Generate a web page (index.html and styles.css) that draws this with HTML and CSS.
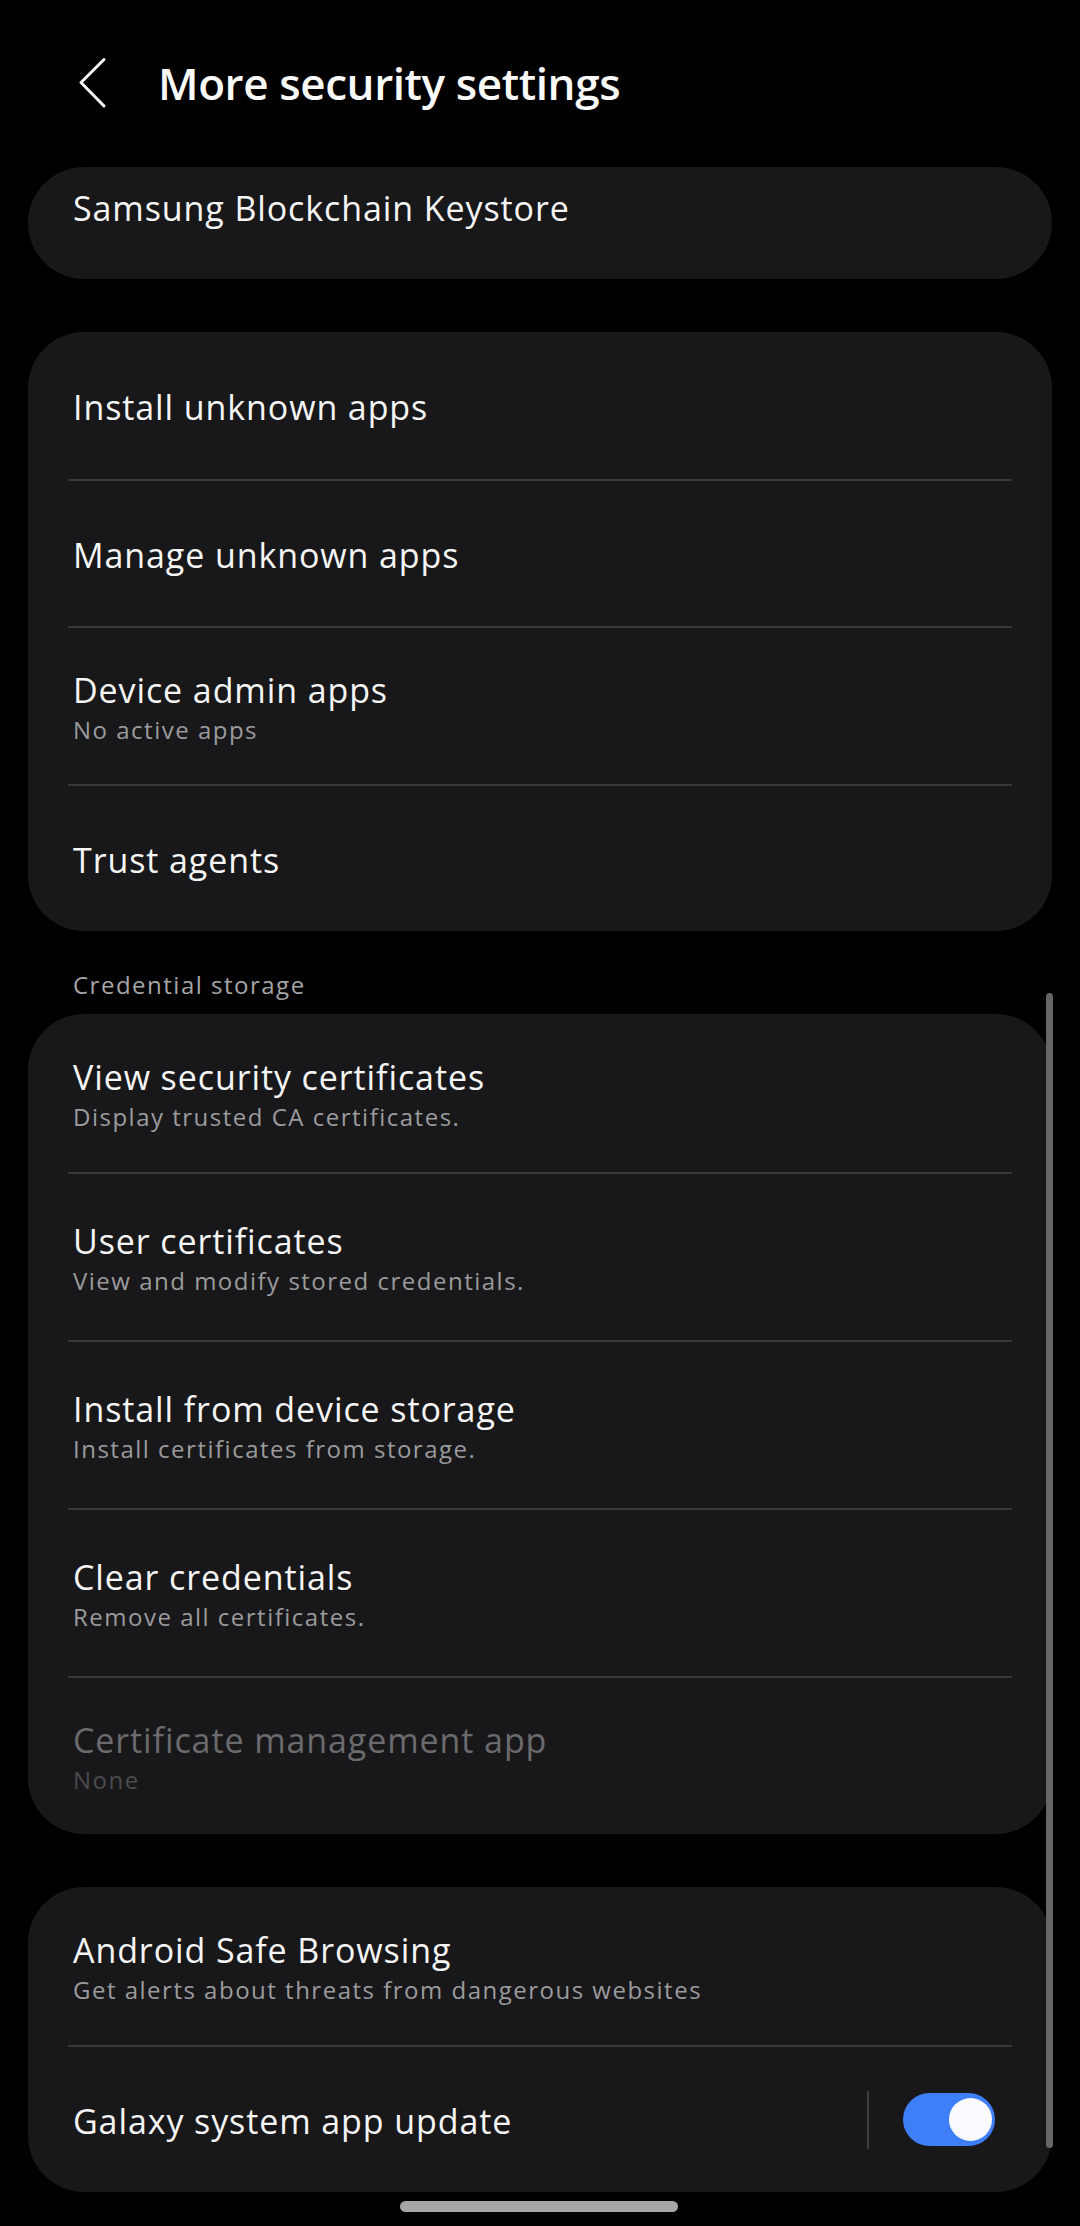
FILE: index.html
```html
<!DOCTYPE html>
<html lang="en">
<head>
<meta charset="utf-8">
<title>More security settings</title>
<link rel="stylesheet" href="styles.css">
</head>
<body>
<div class="screen">
  <header class="appbar">
    <span class="back" aria-label="Back">
      <svg width="30" height="56" viewBox="0 0 30 56"><polyline points="26,3.5 3,26.5 26,50" fill="none" stroke="#f5f5f5" stroke-width="3" stroke-linecap="round" stroke-linejoin="round"/></svg>
    </span>
    <h1 class="appbar-title">More security settings</h1>
  </header>

  <main class="list">
    <section class="card card-cut">
      <div class="title">Samsung Blockchain Keystore</div>
    </section>

    <section class="card">
      <div class="row"><div class="title">Install unknown apps</div></div>
      <div class="row"><div class="title">Manage unknown apps</div></div>
      <div class="row two"><div class="title">Device admin apps</div><div class="sub">No active apps</div></div>
      <div class="row"><div class="title">Trust agents</div></div>
    </section>

    <h2 class="category">Credential storage</h2>

    <section class="card">
      <div class="row two"><div class="title">View security certificates</div><div class="sub">Display trusted CA certificates.</div></div>
      <div class="row two lg"><div class="title">User certificates</div><div class="sub">View and modify stored credentials.</div></div>
      <div class="row two lg"><div class="title">Install from device storage</div><div class="sub">Install certificates from storage.</div></div>
      <div class="row two lg"><div class="title">Clear credentials</div><div class="sub">Remove all certificates.</div></div>
      <div class="row two disabled"><div class="title">Certificate management app</div><div class="sub">None</div></div>
    </section>

    <section class="card">
      <div class="row two"><div class="title">Android Safe Browsing</div><div class="sub">Get alerts about threats from dangerous websites</div></div>
      <div class="row switch-row">
        <div class="title">Galaxy system app update</div>
        <div class="control">
          <span class="vdivider"></span>
          <span class="switch on"><span class="thumb"></span></span>
        </div>
      </div>
    </section>
  </main>

  <div class="scrollbar"></div>
  <div class="home-pill"></div>
</div>
</body>
</html>
```

FILE: styles.css
```css
html, body {
  margin: 0;
  padding: 0;
  background: #000;
}

.screen {
  position: relative;
  width: 1080px;
  height: 2226px;
  overflow: hidden;
  background: #000;
  font-family: "Open Sans", Roboto, "Liberation Sans", sans-serif;
  color: #f5f5f5;
}

.appbar {
  height: 167px;
  display: flex;
  align-items: center;
  padding-left: 78px;
  box-sizing: border-box;
}

.back {
  display: flex;
  width: 30px;
  height: 56px;
}

.appbar-title {
  margin: 0 0 0 50px;
  font-size: 44px;
  line-height: 53px;
  font-weight: 600;
  letter-spacing: -0.4px;
  color: #fafafa;
}

.list {
  display: flex;
  flex-direction: column;
}

.card {
  margin: 0 28px 53px;
  background: #18181a;
  border-radius: 56px;
  display: flex;
  flex-direction: column;
}

.card-cut {
  height: 112px;
  box-sizing: border-box;
  padding: 21px 0 0 45px;
}

.title {
  font-size: 34px;
  line-height: 40px;
  letter-spacing: 0.9px;
  color: #f5f5f5;
  white-space: nowrap;
}

.sub {
  margin-top: 5px;
  font-size: 24px;
  line-height: 30px;
  letter-spacing: 1.5px;
  color: #9b9b9d;
  white-space: nowrap;
}

.row {
  margin: 0 40px;
  padding: 3px 17px 0 5px;
  height: 147px;
  box-sizing: border-box;
  display: flex;
  flex-direction: column;
  justify-content: center;
}

.row + .row {
  border-top: 2px solid #38383a;
}

.row.two {
  height: 158px;
}

.row.two.lg {
  height: 168px;
}

.row.disabled .title {
  color: #6b6b6d;
}

.row.disabled .sub {
  color: #4b4b4d;
}

.category {
  margin: -14px 0 14px 73px;
  font-size: 24px;
  line-height: 30px;
  font-weight: 500;
  letter-spacing: 1.5px;
  color: #a5a5a7;
}

.switch-row {
  flex-direction: row;
  align-items: center;
  justify-content: space-between;
}

.control {
  display: flex;
  align-items: center;
  gap: 34px;
  margin-top: -3px;
}

.vdivider {
  width: 2px;
  height: 58px;
  background: #3f3f41;
}

.switch {
  position: relative;
  width: 92px;
  height: 53px;
  border-radius: 27px;
  background: #3e7ef6;
}

.switch .thumb {
  position: absolute;
  right: 3px;
  top: 5px;
  width: 43px;
  height: 43px;
  border-radius: 50%;
  background: #fbfbff;
}

.scrollbar {
  position: absolute;
  left: 1046px;
  top: 993px;
  width: 7px;
  height: 1155px;
  border-radius: 4px;
  background: #666668;
}

.home-pill {
  position: absolute;
  left: 400px;
  top: 2201px;
  width: 278px;
  height: 11px;
  border-radius: 6px;
  background: #a6a6a6;
}
```
